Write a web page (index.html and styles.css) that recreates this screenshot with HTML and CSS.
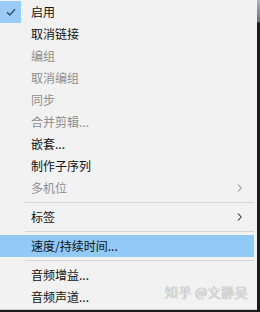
FILE: index.html
```html
<!DOCTYPE html>
<html>
<head>
<meta charset="utf-8">
<link rel="stylesheet" href="styles.css">
</head>
<body>
<div class="menu">
  <div class="item checked">
    <span class="check"><svg width="10" height="8" viewBox="0 0 10 8"><path d="M1 4.2 L3.8 7 L9 1.2" fill="none" stroke="#2f4d6e" stroke-width="1.4"/></svg></span>
    <span class="label">启用</span>
  </div>
  <div class="item"><span class="label">取消链接</span></div>
  <div class="item disabled"><span class="label">编组</span></div>
  <div class="item disabled"><span class="label">取消编组</span></div>
  <div class="item disabled"><span class="label">同步</span></div>
  <div class="item disabled"><span class="label">合并剪辑...</span></div>
  <div class="item"><span class="label">嵌套...</span></div>
  <div class="item"><span class="label">制作子序列</span></div>
  <div class="item disabled"><span class="label">多机位</span>
    <svg class="arrow" width="5" height="8" viewBox="0 0 5 8"><path d="M1 0.5 L4.2 4 L1 7.5" fill="none" stroke="#9a9a9a" stroke-width="1.1"/></svg>
  </div>
  <div class="sep"></div>
  <div class="item"><span class="label">标签</span>
    <svg class="arrow" width="5" height="8" viewBox="0 0 5 8"><path d="M1 0.5 L4.2 4 L1 7.5" fill="none" stroke="#3a3a3a" stroke-width="1.1"/></svg>
  </div>
  <div class="sep"></div>
  <div class="item hover"><span class="label">速度/持续时间...</span></div>
  <div class="sep"></div>
  <div class="item"><span class="label">音频增益...</span></div>
  <div class="item"><span class="label">音频声道...</span></div>
  <div class="watermark">知乎 @文静吴</div>
</div>
</body>
</html>
```
FILE: styles.css
```css
html, body {
  margin: 0;
  padding: 0;
}
body {
  width: 260px;
  height: 312px;
  overflow: hidden;
  background: linear-gradient(to bottom, #b4b4bc 0, #6a6a74 22px, #1c1c1c 23px, #1c1c1c 100%);
  font-family: "Noto Sans CJK SC", "Noto Sans", sans-serif;
  font-size: 12px;
}
.menu {
  position: relative;
  width: 257px;
  height: 310px;
  box-sizing: border-box;
  background: #f2f2f2;
  padding-top: 1px;
  border-bottom: 1px solid #d0d0d0;
  display: flex;
  flex-direction: column;
}
.item {
  height: 22px;
  display: flex;
  align-items: center;
  padding-left: 31px;
  padding-right: 12px;
  color: #111;
  position: relative;
  margin-right: 3px;
}
.item .label {
  flex: 1;
  line-height: 22px;
}
.item.disabled {
  color: #8e8e8e;
}
.item.hover {
  background: #91c9f7;
}
.check {
  position: absolute;
  left: 0;
  top: 0;
  width: 21px;
  height: 22px;
  background: #99cbf4;
  display: flex;
  align-items: center;
  justify-content: center;
}
.arrow {
  display: block;
}
.sep {
  height: 7px;
  margin-left: 25px;
  margin-right: 3px;
  display: flex;
  align-items: center;
}
.sep::before {
  content: "";
  display: block;
  width: 100%;
  height: 1px;
  background: #d7d7d7;
}
.watermark {
  position: absolute;
  left: 165px;
  top: 282px;
  font-size: 13px;
  font-weight: 300;
  color: #f4f4f4;
  text-shadow: 0 0 1px #8a8a8a, 0 0 1px #8a8a8a;
  letter-spacing: 0.5px;
}
```
